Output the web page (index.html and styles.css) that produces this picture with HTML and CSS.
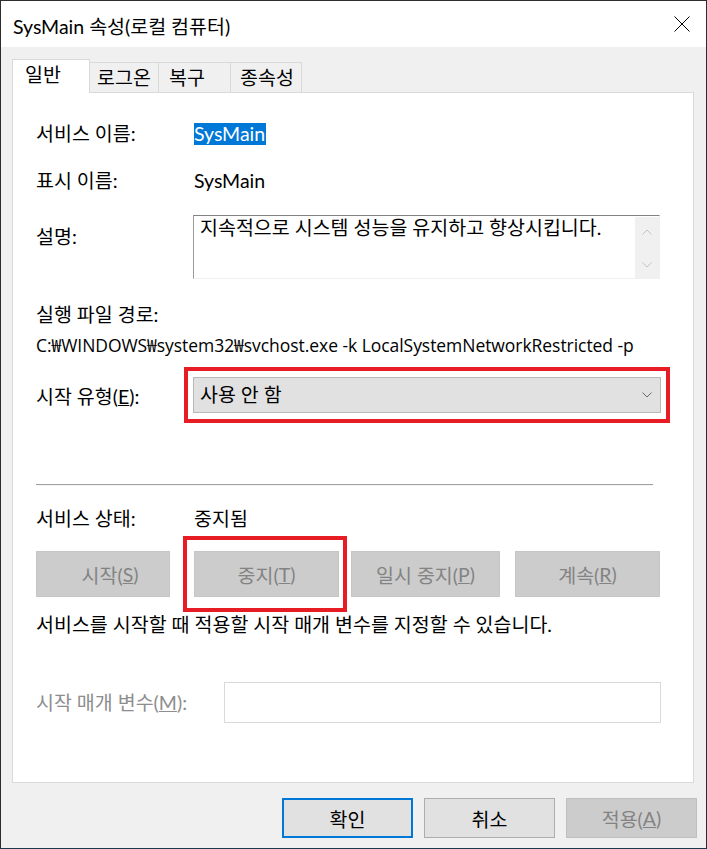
FILE: index.html
```html
<!DOCTYPE html>
<html lang="ko">
<head>
<meta charset="utf-8">
<title>SysMain 속성(로컬 컴퓨터)</title>
<link rel="stylesheet" href="styles.css">
</head>
<body>
<div class="window">
  <div class="titlebar">
    <span class="title">SysMain 속성(로컬 컴퓨터)</span>
    <svg class="close" width="16" height="16" viewBox="0 0 16 16"><path d="M0.5 0.5 L15.5 15.5 M15.5 0.5 L0.5 15.5" stroke="#000" stroke-width="1" fill="none"/></svg>
  </div>
  <div class="content">
    <div class="tabs">
      <div class="tab active">일반</div>
      <div class="tab t-logon">로그온</div>
      <div class="tab t-recovery">복구</div>
      <div class="tab t-deps">종속성</div>
    </div>
    <div class="panel">
      <div class="row">
        <div class="label">서비스 이름:</div>
        <div class="value"><span class="sel">SysMain</span></div>
      </div>
      <div class="row r-display">
        <div class="label">표시 이름:</div>
        <div class="value">SysMain</div>
      </div>
      <div class="row r-desc">
        <div class="label desc-label">설명:</div>
        <div class="textarea">
          <div class="desc-text">지속적으로 시스템 성능을 유지하고 향상시킵니다.</div>
          <div class="scroll">
            <svg width="10" height="6" viewBox="0 0 10 6"><path d="M0.5 5.5 L5 1 L9.5 5.5" stroke="#c4c4c4" fill="none"/></svg>
            <svg width="10" height="6" viewBox="0 0 10 6"><path d="M0.5 0.5 L5 5 L9.5 0.5" stroke="#c4c4c4" fill="none"/></svg>
          </div>
        </div>
      </div>
      <div class="row r-pathlabel">
        <div class="label">실행 파일 경로:</div>
      </div>
      <div class="row r-path">
        <div class="path">C:₩WINDOWS₩system32₩svchost.exe -k LocalSystemNetworkRestricted -p</div>
      </div>
      <div class="row r-startup">
        <div class="label startup-label">시작 유형(<u>E</u>):</div>
        <div class="combo">
          <span>사용 안 함</span>
          <svg width="10" height="6" viewBox="0 0 10 6"><path d="M0.5 0.5 L5 5 L9.5 0.5" stroke="#6a6a6a" fill="none"/></svg>
          <div class="redbox rb-combo"></div>
        </div>
      </div>
      <div class="separator"></div>
      <div class="row r-status">
        <div class="label">서비스 상태:</div>
        <div class="value">중지됨</div>
      </div>
      <div class="buttons">
        <div class="btn dis b-start">시작(<u>S</u>)</div>
        <div class="btn dis b-stop">중지(<u>T</u>)<div class="redbox rb-stop"></div></div>
        <div class="btn dis b-pause">일시 중지(<u>P</u>)</div>
        <div class="btn dis b-resume">계속(<u>R</u>)</div>
      </div>
      <div class="note">서비스를 시작할 때 적용할 시작 매개 변수를 지정할 수 있습니다.</div>
      <div class="row r-param">
        <div class="label param-label">시작 매개 변수(<u>M</u>):</div>
        <div class="input"></div>
      </div>
    </div>
    <div class="footer">
      <div class="fbtn ok">확인</div>
      <div class="fbtn">취소</div>
      <div class="fbtn fdis">적용(<u>A</u>)</div>
    </div>
  </div>
</div>
</body>
</html>
```

FILE: styles.css
```css
html, body {
  margin: 0;
  padding: 0;
  background: #f0f0f0;
}

.window {
  width: 707px;
  height: 849px;
  box-sizing: border-box;
  border: 1px solid #2d2d2d;
  border-bottom-color: #1b3a52;
  background: #f0f0f0;
  font-family: "Lato", "Noto Sans CJK KR", sans-serif;
  font-size: 19.5px;
  color: #000;
  display: flex;
  flex-direction: column;
}

.titlebar {
  height: 46px;
  flex: none;
  background: #fff;
  display: flex;
  justify-content: space-between;
  align-items: flex-start;
  padding: 0 16px 0 12px;
}

.title {
  margin-top: 15px;
  line-height: 22px;
}

.close {
  margin-top: 15px;
}

.content {
  padding: 12px 0 0 11px;
}

.tabs {
  display: flex;
  align-items: flex-end;
  height: 33px;
}

.tab {
  box-sizing: border-box;
  height: 30px;
  border: 1px solid #d9d9d9;
  border-bottom: none;
  border-left: none;
  line-height: 28px;
  padding-top: 1px;
  padding-left: 7px;
  background: #f0f0f0;
  white-space: nowrap;
}

.tab.active {
  height: 34px;
  width: 78px;
  background: #fff;
  border-left: 1px solid #d9d9d9;
  margin-bottom: -1px;
  position: relative;
  z-index: 1;
  line-height: 30px;
  padding-top: 0;
  padding-left: 12px;
}

.t-logon { width: 69px; }
.t-recovery { width: 72px; padding-left: 10px; }
.t-deps { width: 71px; padding-left: 9px; }

.panel {
  width: 682px;
  height: 691px;
  box-sizing: border-box;
  border: 1px solid #d9d9d9;
  background: #fff;
  padding: 30px 0 0 23px;
}

.row {
  display: flex;
  align-items: center;
  line-height: 22px;
  white-space: nowrap;
}

.label {
  width: 158px;
  flex: none;
  line-height: 22px;
}

.sel {
  display: inline-block;
  background: #0078d7;
  color: #fff;
  line-height: 22px;
  padding-right: 1px;
}

.r-display { margin-top: 25px; }

.r-desc {
  margin-top: 23px;
  align-items: flex-start;
}

.desc-label { padding-top: 11px; }

.textarea {
  margin-left: -1px;
  width: 467px;
  height: 64px;
  box-sizing: border-box;
  border-top: 1px solid #828282;
  border-left: 1px solid #9a9a9a;
  border-right: 1px solid #f0f0f0;
  border-bottom: 1px solid #f0f0f0;
  display: flex;
}

.desc-text {
  flex: 1;
  padding: 1px 6px 0 6px;
  line-height: 22px;
  white-space: nowrap;
  overflow: hidden;
}

.scroll {
  width: 24px;
  flex: none;
  margin-top: 1px;
  background: #f0f0f0;
  display: flex;
  flex-direction: column;
  align-items: center;
  justify-content: space-between;
  padding: 12px 0 10px;
  box-sizing: border-box;
}

.r-pathlabel { margin-top: 25px; }
.r-path { margin-top: 8px; }

.path {
  font-family: "Open Sans", "Noto Sans CJK KR", sans-serif;
  font-size: 17.5px;
  letter-spacing: -0.05px;
}

.r-startup { margin-top: 21px; }
.startup-label { padding-top: 4px; }

.combo {
  position: relative;
  margin-left: -1px;
  width: 468px;
  height: 36px;
  box-sizing: border-box;
  background: #e1e1e1;
  border: 1px solid #b9b9b9;
  display: flex;
  align-items: center;
  justify-content: space-between;
  padding: 0 8px 0 6px;
}

.redbox {
  position: absolute;
  border: 4px solid #e81c24;
  box-sizing: border-box;
  pointer-events: none;
}

.rb-combo {
  left: -10px;
  top: -11px;
  width: 486px;
  height: 56px;
}

.separator {
  margin-top: 71px;
  width: 617px;
  height: 1px;
  background: #a0a0a0;
  border-bottom: 1px solid #f4f4f4;
}

.r-status { margin-top: 22px; }

.buttons {
  margin-top: 21px;
  display: flex;
  height: 46px;
}

.btn {
  position: relative;
  box-sizing: border-box;
  height: 46px;
  display: flex;
  align-items: center;
  justify-content: center;
  background: #cccccc;
  border: 1px solid #c6c6c6;
  color: #838383;
  white-space: nowrap;
}

.b-start { width: 134px; padding-left: 14px; }
.b-stop { width: 145px; margin-left: 24px; }
.b-pause { width: 149px; margin-left: 12px; }
.b-resume { width: 145px; margin-left: 15px; }

.rb-stop {
  left: -12px;
  top: -16px;
  width: 164px;
  height: 76px;
}

.note {
  margin-top: 17px;
  line-height: 22px;
  white-space: nowrap;
}

.r-param { margin-top: 46px; }

.param-label {
  width: 188px;
  color: #8d8d8d;
}

.input {
  width: 437px;
  height: 41px;
  box-sizing: border-box;
  border: 1px solid #d9d9d9;
  background: #fff;
}

.footer {
  margin-top: 15px;
  display: flex;
  justify-content: flex-end;
  gap: 11px;
  padding-right: 9px;
}

.fbtn {
  width: 131px;
  height: 40px;
  box-sizing: border-box;
  display: flex;
  align-items: center;
  justify-content: center;
  background: #e1e1e1;
  border: 1px solid #adadad;
}

.fbtn.ok {
  border: 2px solid #0078d7;
}

.fbtn.fdis {
  background: #cccccc;
  border-color: #bfbfbf;
  color: #838383;
}
```
